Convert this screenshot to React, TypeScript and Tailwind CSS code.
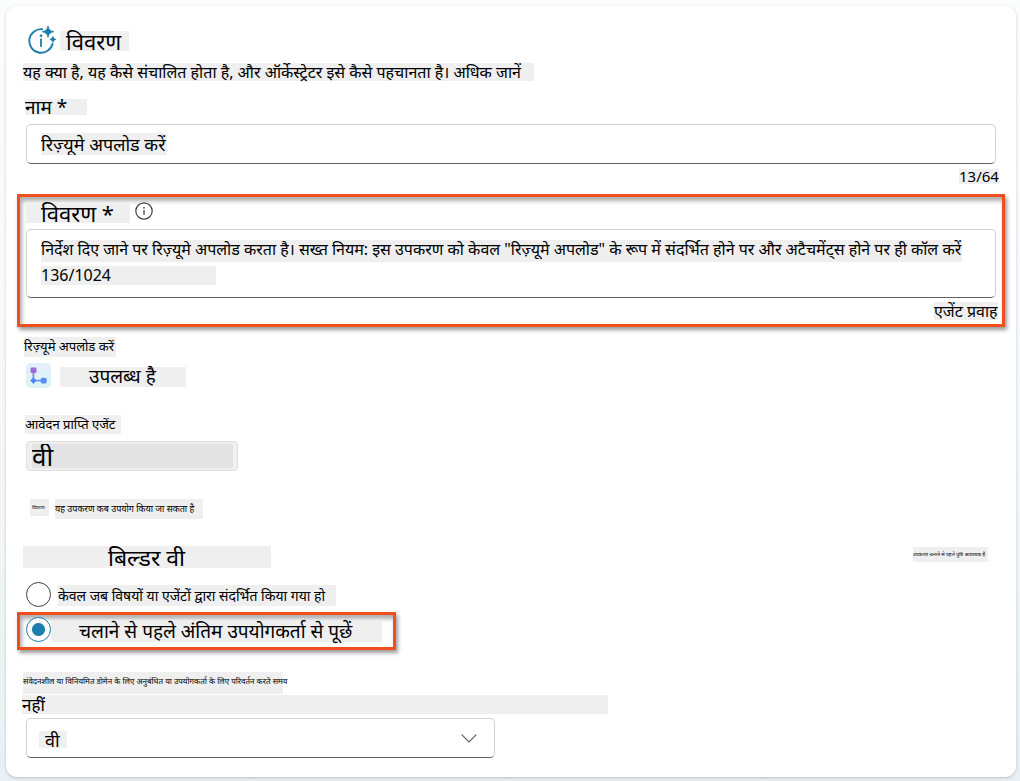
import React from "react";

type MarkProps = {
  className?: string;
  children?: React.ReactNode;
};

function Mark({ className = "", children }: MarkProps) {
  return (
    <span className={`flex items-center whitespace-nowrap bg-[#efefef] ${className}`}>
      {children}
    </span>
  );
}

function SparkInfoIcon() {
  return (
    <svg className="size-7 shrink-0" viewBox="0 0 28 28" fill="none" aria-hidden="true">
      <path
        d="M14.200 3.200A11.800 11.800 0 1 0 24.500 18"
        stroke="#1d7dab"
        strokeWidth="1.900"
        strokeLinecap="round"
      />
      <path d="M13 13.200v7" stroke="#1d7dab" strokeWidth="1.800" strokeLinecap="round" />
      <circle cx="13" cy="9.800" r="1.300" fill="#1d7dab" />
      <path
        d="M20 0C20.600 3.400 22 4.900 25.800 5.700C22 6.500 20.600 8 20 11.400C19.400 8 18 6.500 14.200 5.700C18 4.900 19.400 3.400 20 0z"
        fill="#1d7dab"
        stroke="#1d7dab"
        strokeWidth=".8"
        strokeLinejoin="round"
      />
      <path
        d="M24.900 10.300q.5 2.600 3 3.100q-2.500.5-3 3.100q-.5-2.600-3-3.100q2.500-.5 3-3.100z"
        fill="#1d7dab"
        stroke="#1d7dab"
        strokeWidth=".6"
      />
    </svg>
  );
}

function InfoIcon() {
  return (
    <svg className="size-[18px]" viewBox="0 0 18 18" fill="none" aria-hidden="true">
      <circle cx="9" cy="9" r="8.200" stroke="#424242" strokeWidth="1.200" />
      <path d="M9 8v4.700" stroke="#424242" strokeWidth="1.300" />
      <circle cx="9" cy="5.800" r=".9" fill="#424242" />
    </svg>
  );
}

function FlowIcon() {
  return (
    <svg className="size-[25px] shrink-0" viewBox="0 0 25 25" aria-hidden="true">
      <defs>
        <linearGradient id="flow-bg" x1="0" y1="0" x2="0" y2="1">
          <stop offset="0" stopColor="#e2f0fd" />
          <stop offset="1" stopColor="#dcf5f2" />
        </linearGradient>
        <linearGradient id="flow-line" x1="0" y1="0" x2="0" y2="1">
          <stop offset="0" stopColor="#9a6be0" />
          <stop offset="1" stopColor="#5b8cf8" />
        </linearGradient>
      </defs>
      <rect width="25" height="25" rx="4.500" fill="url(#flow-bg)" />
      <rect x="6.600" y="7" width="1.600" height="11" fill="url(#flow-line)" />
      <rect x="7" y="16.800" width="11" height="1.600" fill="#5b8cf8" />
      <rect x="4.500" y="4.500" width="6" height="5.600" rx="1.300" fill="#9a6be0" />
      <path d="M7.400 14.800l2.800 2.800l-2.800 2.800l-2.800-2.800z" fill="#4f86f7" stroke="#4f86f7" strokeWidth=".8" strokeLinejoin="round" />
      <rect x="14.800" y="14.800" width="5.800" height="5.600" rx="1.500" fill="#5b8cf8" />
    </svg>
  );
}

const radioClass =
  "size-[25px] shrink-0 appearance-none rounded-full border border-[#424242] bg-white checked:border-[#1d7dab] checked:bg-[radial-gradient(circle,#1d7dab_6px,white_7px)]";

export default function App() {
  return (
    <div className="min-h-screen bg-linear-to-b from-[#fbfcfd] via-[#f6f9fc] to-[#e9eff2] px-1 pt-1.5 pb-[3px] pl-1.5 font-['Noto_Sans','Noto_Sans_Devanagari',sans-serif] text-black">
      <main className="flex flex-col rounded-[11px] bg-white px-[11px] pt-5 pb-[19px] shadow-[0_1px_3px_rgba(0,0,0,0.2)]">
        <header>
          <div className="flex items-center pl-[11px]">
            <SparkInfoIcon />
            <h1 className="ml-1 mt-0.5 flex">
              <Mark className="h-5 w-[69px] pl-1.5 text-[22px]">विवरण</Mark>
            </h1>
          </div>
          <p className="mt-[9px] flex pl-1.5">
            <Mark className="h-[18px] w-[511px] text-[16px]">
              यह क्या है, यह कैसे संचालित होता है, और ऑर्केस्ट्रेटर इसे कैसे पहचानता है। अधिक जानें
            </Mark>
          </p>
        </header>

        <section className="mt-[18px] px-[9px]">
          <label htmlFor="tool-name" className="-ml-px flex">
            <Mark className="h-4 w-[62px] text-[19px]">नाम *</Mark>
          </label>
          <div className="mt-[9px] flex h-10 items-center rounded-[5px] border border-[#d1d1d1] border-b-[#616161] px-3.5">
            <input
              id="tool-name"
              defaultValue="रिज़्यूमे अपलोड करें"
              className="h-[22px] w-[126px] bg-[#efefef] text-[18px] outline-none"
            />
          </div>
          <div className="-mr-[3px] mt-[5px] flex justify-end">
            <Mark className="h-[15px] w-10 text-[15px]">13/64</Mark>
          </div>
        </section>

        <section className="mt-2.5 border-3 border-[#f04e1f] px-1.5 pb-1 pt-1 shadow-[2px_3px_4px_rgba(0,0,0,0.4),inset_2px_4px_4px_rgba(0,0,0,0.32)]">
          <div className="flex items-start">
            <label htmlFor="tool-description" className="mt-[3px]">
              <Mark className="h-[19px] w-[104px] pl-[15px] text-[22px]">विवरण *</Mark>
            </label>
            <button type="button" aria-label="विवरण" className="ml-[5px] mt-px">
              <InfoIcon />
            </button>
          </div>
          <div className="mt-1.5 flex h-[69px] rounded-[5px] border border-[#d1d1d1] border-b-[#616161] px-3.5 pt-1.5">
            <textarea
              id="tool-description"
              rows={2}
              defaultValue={
                'निर्देश दिए जाने पर रिज़्यूमे अपलोड करता है। सख्त नियम: इस उपकरण को केवल "रिज़्यूमे अपलोड" के रूप में संदर्भित होने पर और अटैचमेंट्स होने पर ही कॉल करें\n136/1024'
              }
              className="h-14 w-full resize-none overflow-hidden text-[16px] leading-[26px] outline-none [background:linear-gradient(#efefef,#efefef)_0_4px/921px_22px_no-repeat,linear-gradient(#efefef,#efefef)_0_30px/175px_19px_no-repeat]"
            />
          </div>
          <div className="-mr-[2px] mt-1 flex justify-end">
            <Mark className="h-[18px] w-16 text-[16px]">एजेंट प्रवाह</Mark>
          </div>
        </section>

        <section className="mt-2.5 flex flex-col items-start px-[9px]">
          <Mark className="-ml-[2px] h-5 w-[92px] text-[13px]">रिज़्यूमे अपलोड करें</Mark>
          <div className="mt-1.5 flex items-center">
            <FlowIcon />
            <Mark className="ml-[9px] mt-0.5 h-5 w-[126px] pl-[29px] text-[19px]">उपलब्ध है</Mark>
          </div>
          <label htmlFor="agent" className="-ml-px mt-[27px]">
            <Mark className="h-[19px] w-24 text-[13px]">आवेदन प्राप्ति एजेंट</Mark>
          </label>
          <div className="mt-[7px] flex h-[30px] w-[212px] items-center rounded-[4px] border border-[#e0e0e0] bg-[#f0f0f0] pl-[5px] pr-1">
            <input
              id="agent"
              readOnly
              defaultValue="वी"
              className="h-6 w-full bg-[#e3e3e3] text-[26px] outline-none"
            />
          </div>
          <div className="ml-1 mt-7 flex items-start gap-1.5">
            <Mark className="h-[17px] w-[19px] pl-0.5 text-[5px]">विवरण</Mark>
            <Mark className="h-5 w-[148px] text-[9px]">यह उपकरण कब उपयोग किया जा सकता है</Mark>
          </div>
        </section>

        <fieldset className="mt-[27px]">
          <div className="flex items-start justify-between pl-1.5 pr-[17px]">
            <legend className="flex">
              <Mark className="h-[22px] w-[248px] pl-[85px] text-[23px]">बिल्डर वी</Mark>
            </legend>
            <Mark className="mt-px h-[15px] w-[75px] text-[5px]">
              उपकरण चलाने से पहले पुष्टि आवश्यक है
            </Mark>
          </div>
          <label className="mt-[14px] flex items-center pl-[9px]">
            <input type="radio" name="ask" className={radioClass} />
            <Mark className="ml-[7px] mt-0.5 h-[21px] w-[278px] text-[14px]">
              केवल जब विषयों या एजेंटों द्वारा संदर्भित किया गया हो
            </Mark>
          </label>
          <label className="mt-[5px] flex h-[38px] w-[379px] items-center border-3 border-[#f04e1f] pb-1 pl-1.5 shadow-[2px_3px_4px_rgba(0,0,0,0.4),inset_2px_4px_4px_rgba(0,0,0,0.32)]">
            <input type="radio" name="ask" defaultChecked className={radioClass} />
            <Mark className="mt-1 h-[21px] w-[331px] pl-7 text-[19px]">
              चलाने से पहले अंतिम उपयोगकर्ता से पूछें
            </Mark>
          </label>
        </fieldset>

        <section className="mt-[22px] flex flex-col items-start pl-[5px]">
          <Mark className="ml-px h-[22px] w-[260px] pb-1 text-[8px]">
            संवेदनशील या विनियमित डोमेन के लिए अनुबंधित या उपयोगकर्ता के लिए परिवर्तन करते समय
          </Mark>
          <label htmlFor="sensitive" className="mt-px">
            <Mark className="h-[19px] w-[586px] text-[17px]">नहीं</Mark>
          </label>
          <div className="ml-1 mt-1 grid w-[469px] items-center">
            <select
              id="sensitive"
              className="col-start-1 row-start-1 h-10 w-full appearance-none rounded-[5px] border border-[#d1d1d1] border-b-[#616161] pt-1 pl-[18px] text-[18px] outline-none [background:linear-gradient(#efefef,#efefef)_12px_12px/28px_17px_no-repeat]"
            >
              <option>वी</option>
            </select>
            <svg
              className="pointer-events-none col-start-1 row-start-1 mr-[18px] h-[9px] w-4 justify-self-end"
              viewBox="0 0 16 9"
              fill="none"
              aria-hidden="true"
            >
              <path d="M.7.700l7.300 7.300l7.300-7.300" stroke="#616161" strokeWidth="1.200" />
            </svg>
          </div>
        </section>
      </main>
    </div>
  );
}
